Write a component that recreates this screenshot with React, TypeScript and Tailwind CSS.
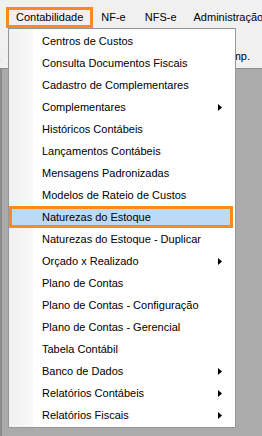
import { Fragment } from "react"

const items: { label: string; sub?: boolean; active?: boolean }[] = [
  { label: "Centros de Custos" },
  { label: "Consulta Documentos Fiscais" },
  { label: "Cadastro de Complementares" },
  { label: "Complementares", sub: true },
  { label: "Históricos Contábeis" },
  { label: "Lançamentos Contábeis" },
  { label: "Mensagens Padronizadas" },
  { label: "Modelos de Rateio de Custos" },
  { label: "Naturezas do Estoque", active: true },
  { label: "Naturezas do Estoque - Duplicar" },
  { label: "Orçado x Realizado", sub: true },
  { label: "Plano de Contas" },
  { label: "Plano de Contas - Configuração" },
  { label: "Plano de Contas - Gerencial" },
  { label: "Tabela Contábil" },
  { label: "Banco de Dados", sub: true },
  { label: "Relatórios Contábeis", sub: true },
  { label: "Relatórios Fiscais", sub: true },
]

function Arrow() {
  return (
    <svg width="4" height="7" viewBox="0 0 4 7" className="shrink-0">
      <path d="M0 0 L4 3.5 L0 7 Z" fill="#000" />
    </svg>
  )
}

export default function App() {
  return (
    <div
      className="relative w-[262px] h-[436px] overflow-hidden bg-[#ababab] text-[11px] text-black flex flex-col"
      style={{ fontFamily: '"Liberation Sans", Arial, sans-serif' }}
    >
      {/* menu bar */}
      <div className="h-[30px] bg-[#f0f0f0] flex items-center pl-[6px] pt-[5px] whitespace-nowrap">
        <div className="h-[21px] px-[7px] flex items-center border-[3px] border-[#f98a1f]">Contabilidade</div>
        <div className="ml-[8px]">NF-e</div>
        <div className="ml-[19px]">NFS-e</div>
        <div className="ml-[17px]">Administração</div>
      </div>

      {/* toolbar (mostly covered) */}
      <div className="h-[39px] bg-[#f0f0f0] border-b border-[#8c8c8c] flex items-end justify-between pb-[4px]">
        <span className="-ml-[3px]">t</span>
        <div className="flex flex-col items-end pr-[12px]">
          <div className="w-[3px] h-[8px] bg-[#e2572c] mb-[4px] mr-[14px]" />
          <span>omp.</span>
        </div>
      </div>

      {/* MDI area */}
      <div className="flex-1 border-l-2 border-[#8c8c8c]" />

      {/* dropdown */}
      <div className="absolute left-[8px] top-[28px] w-[228px] bg-white border border-[#979797] py-[1px] flex">
        <div className="absolute left-0 top-0 bottom-0 w-[24px] bg-gradient-to-r from-[#f1f1f1] to-[#f8f8f8]" />
        <div className="relative flex flex-col w-full">
          {items.map((it) => (
            <Fragment key={it.label}>
              <div
                className={
                  it.active
                    ? "h-[22px] flex items-center pl-[30px] pr-[12px] bg-[#bdd9f3] border-[3px] border-[#f98a1f] mr-[2px]"
                    : "h-[22px] flex items-center pl-[33px] pr-[13px]"
                }
              >
                <span className="flex-1 whitespace-nowrap">{it.label}</span>
                {it.sub && <Arrow />}
              </div>
            </Fragment>
          ))}
        </div>
      </div>
    </div>
  )
}
